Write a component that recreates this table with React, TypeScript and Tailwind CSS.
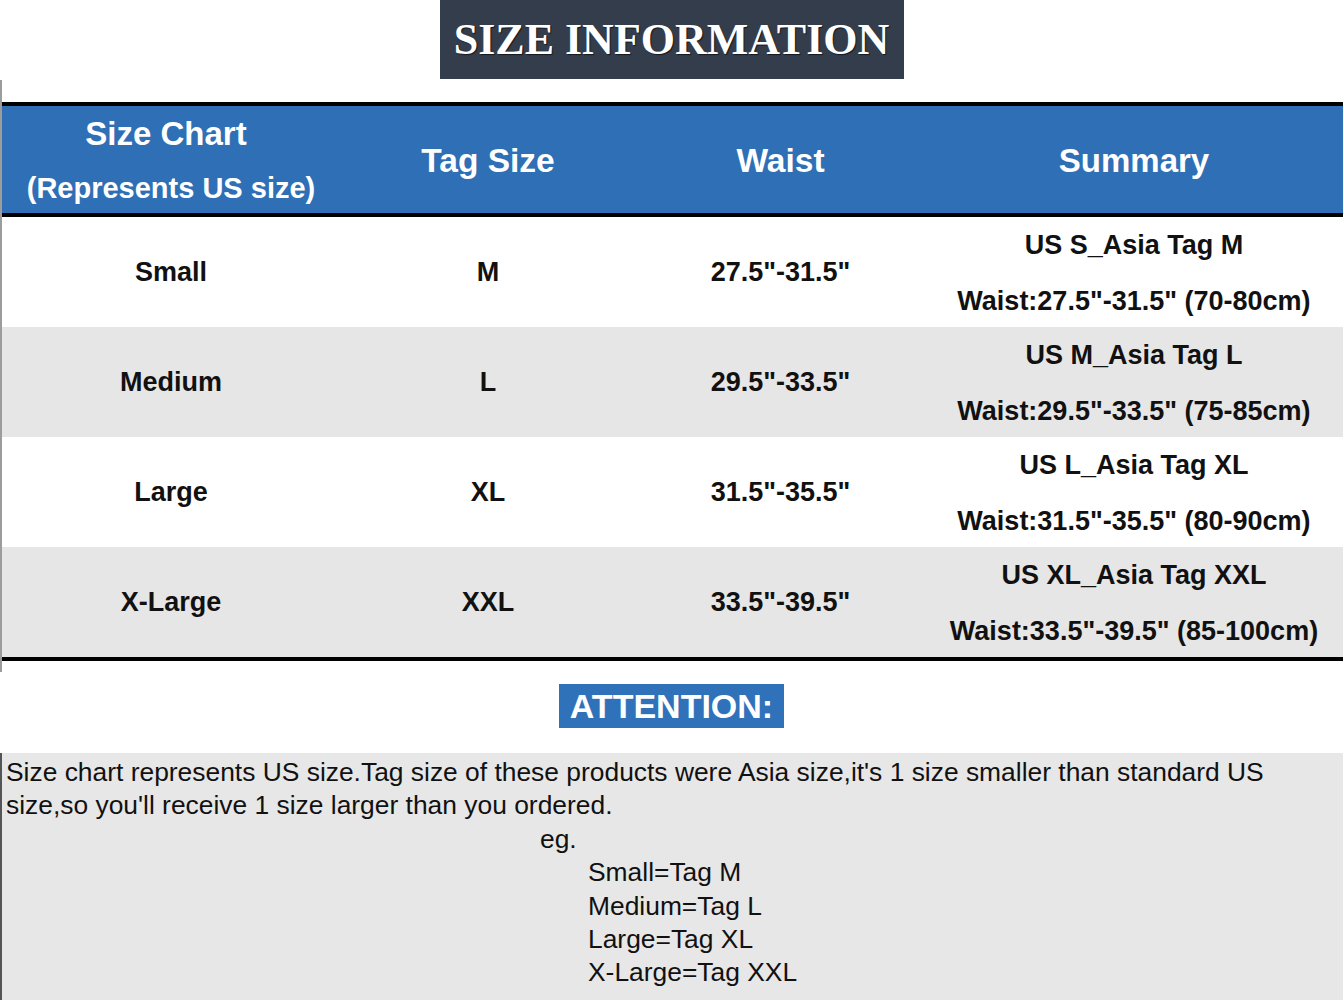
import React from 'react'

interface SizeRow {
  us: string
  tag: string
  waist: string
  line1: string
  line2: string
}

const rows: SizeRow[] = [
  { us: 'Small', tag: 'M', waist: '27.5"-31.5"', line1: 'US S_Asia Tag M', line2: 'Waist:27.5"-31.5" (70-80cm)' },
  { us: 'Medium', tag: 'L', waist: '29.5"-33.5"', line1: 'US M_Asia Tag L', line2: 'Waist:29.5"-33.5" (75-85cm)' },
  { us: 'Large', tag: 'XL', waist: '31.5"-35.5"', line1: 'US L_Asia Tag XL', line2: 'Waist:31.5"-35.5" (80-90cm)' },
  { us: 'X-Large', tag: 'XXL', waist: '33.5"-39.5"', line1: 'US XL_Asia Tag XXL', line2: 'Waist:33.5"-39.5" (85-100cm)' },
]

const examples = ['Small=Tag M', 'Medium=Tag L', 'Large=Tag XL', 'X-Large=Tag XXL']

export default function App() {
  return (
    <div className="w-[1343px] h-[1000px] overflow-hidden bg-white font-['Liberation_Sans',Arial,sans-serif] text-[#111]">
      {/* title banner */}
      <div className="flex justify-center">
        <div className="w-[464px] h-[79px] bg-[#343d4b] flex items-center justify-center">
          <span className="font-['Liberation_Serif','Times_New_Roman',serif] font-bold text-[44px] leading-none text-white [text-shadow:1px_1px_1px_rgba(0,0,0,0.6)]">
            SIZE INFORMATION
          </span>
        </div>
      </div>

      <div className="border-l-2 border-[#9c9c9c] mt-px">
        <div className="h-[22px]" />

        {/* table */}
        <div className="border-t-4 border-b-[4px] border-black">
          <div className="grid grid-cols-[338px_296px_289px_1fr] h-[111px] bg-[#2f6fb5] text-white font-bold border-b-4 border-black">
            <div className="flex flex-col items-center justify-center">
              <span className="text-[33px] leading-[55px] pr-[10px]">Size Chart</span>
              <span className="text-[29px] leading-[55px]">(Represents US size)</span>
            </div>
            <div className="flex items-center justify-center text-[33.5px]">Tag Size</div>
            <div className="flex items-center justify-center text-[33.5px]">Waist</div>
            <div className="flex items-center justify-center text-[33px]">Summary</div>
          </div>

          {rows.map((r, i) => (
            <div
              key={r.us}
              className={`grid grid-cols-[338px_296px_289px_1fr] h-[110px] font-bold text-[27px] ${i % 2 === 1 ? 'bg-[#e6e6e6]' : 'bg-white'}`}
            >
              <div className="flex items-center justify-center pb-[3px]">{r.us}</div>
              <div className="flex items-center justify-center pb-[3px]">{r.tag}</div>
              <div className="flex items-center justify-center pb-[3px]">{r.waist}</div>
              <div className="flex flex-col items-center justify-center pb-[2px]">
                <span className="leading-[56px]">{r.line1}</span>
                <span className="leading-[56px]">{r.line2}</span>
              </div>
            </div>
          ))}
        </div>
        <div className="h-[11px]" />
      </div>

      {/* attention */}
      <div className="flex justify-center pt-[12px] pb-[25px]">
        <div className="h-[44px] px-[11px] bg-[#2f72ba] flex items-center">
          <span className="text-white font-bold text-[34px] leading-none">ATTENTION:</span>
        </div>
      </div>

      {/* note */}
      <div className="h-[248px] bg-[#e7e7e7] border-l-2 border-[#555] pl-[4px] pt-[3px] text-[26.4px] leading-[33.4px] text-[#111]">
        <div>Size chart represents US size.Tag size of these products were Asia size,it's 1 size smaller than standard US</div>
        <div>size,so you'll receive 1 size larger than you ordered.</div>
        <div className="pl-[534px]">eg.</div>
        <div className="pl-[582px]">
          {examples.map((e) => (
            <div key={e}>{e}</div>
          ))}
        </div>
      </div>
    </div>
  )
}
